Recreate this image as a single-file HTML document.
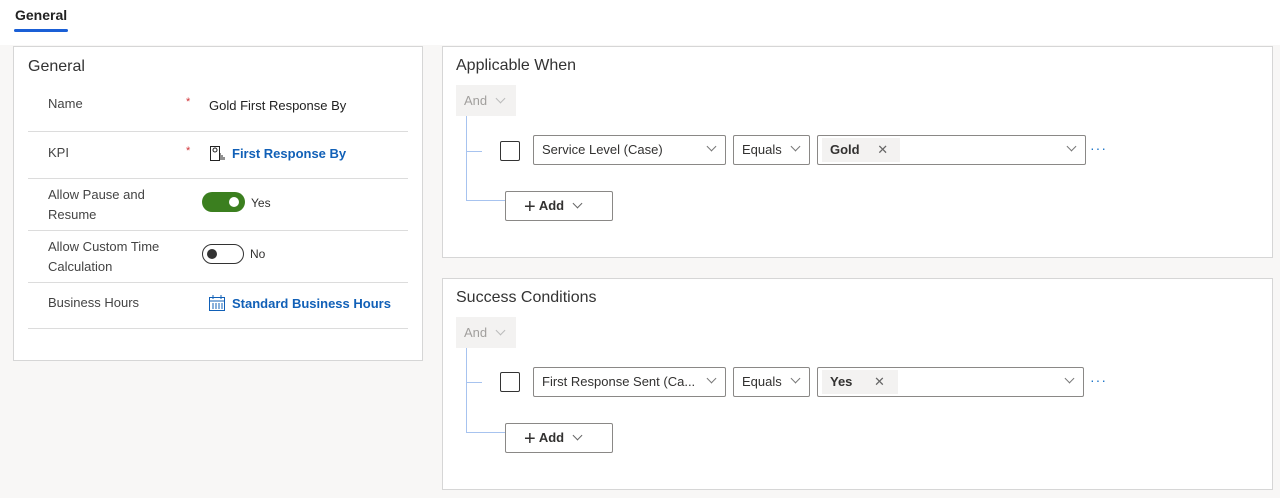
<!DOCTYPE html>
<html><head><meta charset="utf-8"><style>
*{box-sizing:border-box;margin:0;padding:0}
body{width:1280px;height:498px;background:#f8f7f6;font-family:"Liberation Sans",Arial,sans-serif;color:#323130;position:relative;overflow:hidden;font-size:13px}
.a{position:absolute}
.top{left:0;top:0;width:1280px;height:45px;background:#fff}
.card{background:#fff;border:1px solid #d6d6d6}
.lbl{font-size:13px;color:#444}
.hr{height:1px;background:#dcdcdc}
.star{color:#d13438;font-size:11px}
.link{color:#1160b7;font-weight:bold;font-size:13px}
.box{border:1px solid #8a8886;background:#fff;height:30px;border-radius:2px;font-size:13px;padding:0 8px;line-height:28px}
.chev{position:absolute;right:10px;top:7px;width:7px;height:7px;border-right:1px solid #777;border-bottom:1px solid #777;transform:rotate(45deg)}
</style></head><body>
<div class="a top"></div>
<div class="a" style="left:15px;top:7px;font-size:14px;font-weight:bold;color:#222">General</div>
<div class="a" style="left:14px;top:29px;width:54px;height:3px;background:#1a5fd6;border-radius:2px"></div>

<div class="a card" style="left:13px;top:46px;width:410px;height:315px"></div>
<div class="a" style="left:28px;top:58px;font-size:16px;color:#333">General</div>
<div class="a lbl" style="left:48px;top:96px">Name</div>
<div class="a star" style="left:186px;top:96px">*</div>
<div class="a" style="left:209px;top:98px;font-size:13px;color:#222">Gold First Response By</div>
<div class="a hr" style="top:131px;left:28px;width:380px"></div>
<div class="a lbl" style="left:48px;top:145px">KPI</div>
<div class="a star" style="left:186px;top:145px">*</div>
<svg class="a" style="left:209px;top:145px" width="17" height="17" viewBox="0 0 17 17" fill="none" stroke="#222" stroke-width="1"><rect x="1.5" y="1.5" width="9" height="14"/><circle cx="6" cy="5" r="2"/><path d="M11 8v7M13 10v5M15 12v3"/></svg>
<div class="a link" style="left:232px;top:146px">First Response By</div>
<div class="a hr" style="top:178px;left:28px;width:380px"></div>
<div class="a lbl" style="left:48px;top:185px;line-height:20px">Allow Pause and<br>Resume</div>
<div class="a" style="left:202px;top:192px;width:43px;height:20px;background:#3b7f1f;border-radius:10px"></div>
<div class="a" style="left:229px;top:197px;width:10px;height:10px;background:#fff;border-radius:50%"></div>
<div class="a" style="left:251px;top:196px;font-size:12px">Yes</div>
<div class="a hr" style="top:230px;left:28px;width:380px"></div>
<div class="a lbl" style="left:48px;top:237px;line-height:20px">Allow Custom Time<br>Calculation</div>
<div class="a" style="left:202px;top:244px;width:42px;height:20px;border:1.5px solid #333;border-radius:10px"></div>
<div class="a" style="left:207px;top:249px;width:10px;height:10px;background:#333;border-radius:50%"></div>
<div class="a" style="left:250px;top:247px;font-size:12px">No</div>
<div class="a hr" style="top:282px;left:28px;width:380px"></div>
<div class="a lbl" style="left:48px;top:295px">Business Hours</div>
<svg class="a" style="left:209px;top:295px" width="16" height="16" viewBox="0 0 16 16" fill="none" stroke="#1160b7" stroke-width="1"><rect x="0.5" y="2.5" width="15" height="13"/><path d="M0.5 6h15M4 0v4M12 0v4M4 8v6M7 8v6M10 8v6M13 8v6"/></svg>
<div class="a link" style="left:232px;top:296px">Standard Business Hours</div>
<div class="a hr" style="top:328px;left:28px;width:380px"></div>

<div class="a card" style="left:442px;top:46px;width:831px;height:212px"></div>
<div class="a card" style="left:442px;top:278px;width:831px;height:212px"></div>

<div class="a" style="left:456px;top:57px;font-size:16px;color:#333">Applicable When</div>
<div class="a" style="left:456px;top:289px;font-size:16px;color:#333">Success Conditions</div>

<div class="a" style="left:456px;top:85px;width:60px;height:31px;background:#f3f2f1;color:#a19f9d;font-size:13px;line-height:31px;padding-left:8px">And <span style="display:inline-block;width:7px;height:7px;border-right:1px solid #bbb;border-bottom:1px solid #bbb;transform:rotate(45deg);margin:0 0 3px 6px"></span></div>
<div class="a" style="left:466px;top:116px;width:1px;height:85px;background:#a7c3ef"></div>
<div class="a" style="left:466px;top:151px;width:16px;height:1px;background:#a7c3ef"></div>
<div class="a" style="left:466px;top:200px;width:40px;height:1px;background:#a7c3ef"></div>
<div class="a" style="left:500px;top:141px;width:20px;height:20px;border:1px solid #333;border-radius:2px;background:#fff"></div>
<div class="a box" style="left:533px;top:135px;width:193px">Service Level (Case)<span class="chev"></span></div>
<div class="a box" style="left:733px;top:135px;width:77px">Equals<span class="chev"></span></div>
<div class="a box" style="left:817px;top:135px;width:269px;padding:0 4px"><span style="display:inline-block;background:#f3f2f1;height:24px;line-height:24px;margin-top:2px;width:78px;padding-left:8px;font-weight:bold;vertical-align:top">Gold <span style="font-weight:normal;color:#666;margin-left:14px">✕</span></span><span class="chev"></span></div>
<div class="a" style="left:1090px;top:140px;color:#1a73c7;font-size:14px;letter-spacing:1px">···</div>
<div class="a" style="left:505px;top:191px;width:108px;height:30px;border:1px solid #8a8886;background:#fff;border-radius:2px;font-size:13px;font-weight:bold;line-height:28px;padding-left:18px"><span style="font-weight:normal;font-size:20px;vertical-align:-3px">+</span> Add <span style="display:inline-block;width:7px;height:7px;border-right:1px solid #666;border-bottom:1px solid #666;transform:rotate(45deg);margin:0 0 3px 6px"></span></div>

<div class="a" style="left:456px;top:317px;width:60px;height:31px;background:#f3f2f1;color:#a19f9d;font-size:13px;line-height:31px;padding-left:8px">And <span style="display:inline-block;width:7px;height:7px;border-right:1px solid #bbb;border-bottom:1px solid #bbb;transform:rotate(45deg);margin:0 0 3px 6px"></span></div>
<div class="a" style="left:466px;top:348px;width:1px;height:85px;background:#a7c3ef"></div>
<div class="a" style="left:466px;top:382px;width:16px;height:1px;background:#a7c3ef"></div>
<div class="a" style="left:466px;top:432px;width:40px;height:1px;background:#a7c3ef"></div>
<div class="a" style="left:500px;top:372px;width:20px;height:20px;border:1px solid #333;border-radius:2px;background:#fff"></div>
<div class="a box" style="left:533px;top:367px;width:193px">First Response Sent (Ca...<span class="chev"></span></div>
<div class="a box" style="left:733px;top:367px;width:77px">Equals<span class="chev"></span></div>
<div class="a box" style="left:817px;top:367px;width:267px;padding:0 4px"><span style="display:inline-block;background:#f3f2f1;height:24px;line-height:24px;margin-top:2px;width:76px;padding-left:8px;font-weight:bold;vertical-align:top">Yes <span style="font-weight:normal;color:#666;margin-left:18px">✕</span></span><span class="chev"></span></div>
<div class="a" style="left:1090px;top:372px;color:#1a73c7;font-size:14px;letter-spacing:1px">···</div>
<div class="a" style="left:505px;top:423px;width:108px;height:30px;border:1px solid #8a8886;background:#fff;border-radius:2px;font-size:13px;font-weight:bold;line-height:28px;padding-left:18px"><span style="font-weight:normal;font-size:20px;vertical-align:-3px">+</span> Add <span style="display:inline-block;width:7px;height:7px;border-right:1px solid #666;border-bottom:1px solid #666;transform:rotate(45deg);margin:0 0 3px 6px"></span></div>
</body></html>
